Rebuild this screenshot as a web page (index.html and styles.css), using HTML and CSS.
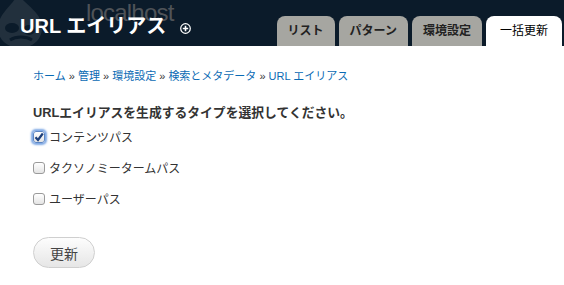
FILE: index.html
```html
<!DOCTYPE html>
<html lang="ja">
<head>
    <meta charset="UTF-8">
    <title>URL エイリアス</title>
    <link rel="stylesheet" href="styles.css">
</head>
<body>
    <header class="cabecera">
        <svg class="logo" width="52" height="46" viewBox="0 0 52 46">
            <path d="M22 -6 C30 6 46 12 46 28 C46 40 36 48 24 48 C12 48 2 40 2 28 C2 14 16 6 22 -6 Z" fill="#22303d"/>
            <ellipse cx="16" cy="28" rx="7" ry="5" fill="#0b1b2a"/>
            <ellipse cx="33" cy="30" rx="6" ry="5" fill="#0b1b2a"/>
            <path d="M14 40 C20 36 30 36 36 40" stroke="#0b1b2a" stroke-width="3" fill="none"/>
        </svg>
        <div class="sitio">localhost</div>
        <h1 class="titulo">URL エイリアス <span class="mas"><svg width="11" height="11" viewBox="0 0 11 11"><circle cx="5.5" cy="5.5" r="4.8" fill="#0b1b2a" stroke="#fff" stroke-width="1.2"/><path d="M5.5 2.8v5.4M2.8 5.5h5.4" stroke="#fff" stroke-width="1.6"/></svg></span></h1>
        <nav class="pestanas">
            <a href="#">リスト</a>
            <a href="#">パターン</a>
            <a href="#">環境設定</a>
            <a href="#" class="activa">一括更新</a>
        </nav>
    </header>
    <div class="contenido">
        <div class="migas">
            <a href="#">ホーム</a> » <a href="#">管理</a> » <a href="#">環境設定</a> » <a href="#">検索とメタデータ</a> » <a href="#">URL エイリアス</a>
        </div>
        <h2 class="pregunta">URLエイリアスを生成するタイプを選択してください。</h2>
        <div class="opcion"><span class="caja marcada"><svg width="10" height="10" viewBox="0 0 10 10"><path d="M1.5 5.2 L4 8 L8.8 1.5" stroke="#1d3f7a" stroke-width="2.2" fill="none"/></svg></span>コンテンツパス</div>
        <div class="opcion"><span class="caja"></span>タクソノミータームパス</div>
        <div class="opcion"><span class="caja"></span>ユーザーパス</div>
        <button class="boton">更新</button>
    </div>
</body>
</html>
```

FILE: styles.css
```css
body {
    margin: 0;
    font-family: "Liberation Sans", "Noto Sans CJK JP", sans-serif;
    background-color: #fff;
    color: #333;
}
.cabecera {
    position: relative;
    background-color: #0b1b2a;
    height: 46px;
    display: flex;
    align-items: flex-end;
    justify-content: space-between;
    overflow: hidden;
}
.logo {
    position: absolute;
    left: -4px;
    top: 0;
}
.sitio {
    position: absolute;
    left: 86px;
    top: 1px;
    font-size: 24px;
    line-height: 24px;
    color: #4f5358;
    letter-spacing: -0.8px;
}
.titulo {
    position: relative;
    margin: 0 0 6px 20px;
    font-size: 20px;
    font-weight: bold;
    color: #fff;
    line-height: 26px;
}
.mas {
    display: inline-block;
    margin-left: 8px;
    vertical-align: -1px;
}
.pestanas {
    display: flex;
    gap: 4px;
    padding-right: 2px;
}
.pestanas a {
    background-color: #a6a6a1;
    color: #222;
    font-size: 12px;
    font-weight: bold;
    text-decoration: none;
    height: 30px;
    line-height: 31px;
    padding: 0 11px;
    border-radius: 8px 8px 0 0;
}
.pestanas a.activa {
    background-color: #fff;
    color: #000;
    font-weight: normal;
    padding: 0 14px;
}
.contenido {
    padding: 22px 33px;
}
.migas {
    font-size: 11px;
    line-height: 16px;
    color: #333;
}
.migas a {
    color: #0a6ab4;
    text-decoration: none;
}
.pregunta {
    font-size: 12.8px;
    font-weight: bold;
    margin: 21px 0 0;
    line-height: 16px;
}
.opcion {
    display: flex;
    align-items: center;
    font-size: 12px;
    height: 31px;
}
.caja {
    width: 10px;
    height: 10px;
    border: 1px solid #9a9a9a;
    border-radius: 3px;
    background: linear-gradient(#fff, #e4e4e4);
    margin-right: 4px;
    display: flex;
    align-items: center;
    justify-content: center;
}
.caja.marcada {
    border-color: #5c86c4;
    box-shadow: 0 0 2px 2px #7ea8e4;
}
.boton {
    margin-top: 23px;
    width: 62px;
    height: 31px;
    border: 1px solid #cfcfcf;
    border-radius: 16px;
    background: linear-gradient(#fdfdfd, #e6e6e6);
    font-family: "Liberation Sans", "Noto Sans CJK JP", sans-serif;
    font-size: 14px;
    color: #444;
}
```
